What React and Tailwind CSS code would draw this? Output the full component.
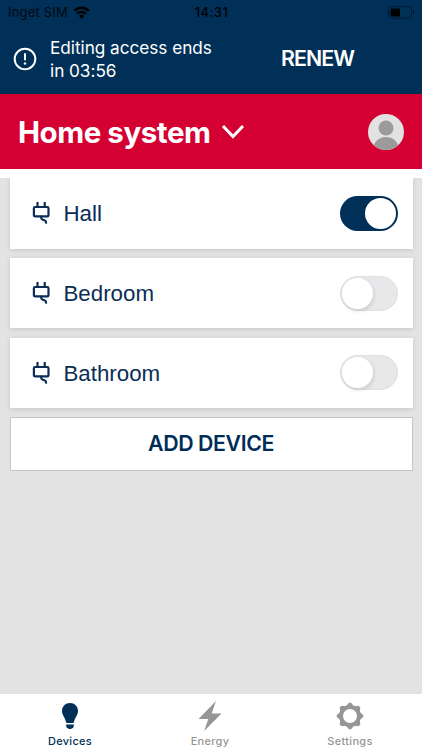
import { useState } from "react";

function StatusBar() {
  return (
    <div className="flex h-6 items-center justify-between pl-2 pr-[7px] text-black">
      <div className="flex w-[170px] items-center gap-[5px]">
        <span className="text-[13px] leading-6 tracking-[0.2px] opacity-80">Inget SIM</span>
        <svg width="17" height="13" viewBox="0 0 17 13" fill="none" stroke="currentColor">
          <path d="M1.2 4.8a10.4 10.4 0 0 1 14.6 0" strokeWidth="2.4" />
          <path d="M4 7.8a6.4 6.4 0 0 1 9 0" strokeWidth="2.2" />
          <path d="M8.5 12.5 5.9 9.9a3.7 3.7 0 0 1 5.2 0z" fill="currentColor" stroke="none" />
        </svg>
      </div>
      <span className="text-[13px] font-medium leading-6 tracking-[0.4px]">14:31</span>
      <div className="flex w-[170px] justify-end">
        <svg width="27" height="13" viewBox="0 0 27 13">
          <rect x="0.6" y="0.6" width="23" height="11.6" rx="3" fill="none" stroke="#001a34" />
          <rect x="2.5" y="2.5" width="9.5" height="8" rx="1" fill="#000" />
          <path d="M25 4.5c1.8.7 1.8 3.3 0 4z" fill="#001a34" />
        </svg>
      </div>
    </div>
  );
}

function PlugIcon() {
  return (
    <svg
      width="18"
      height="24"
      viewBox="0 0 18 24"
      fill="none"
      stroke="currentColor"
      strokeWidth="2.2"
      strokeLinecap="round"
      strokeLinejoin="round"
    >
      <path d="M5.5 1.8V6M12.7 1.8V6" />
      <rect x="1.9" y="6" width="14.6" height="9.4" rx="1.2" />
      <path d="M9.2 15.8v1c0 1 .6 1.6 1.5 1.9l1.8.6c1 .4 1.6 1.100 1.6 2.500" />
    </svg>
  );
}

function Toggle({ on, onClick }) {
  return (
    <button
      onClick={onClick}
      className={`flex h-[35px] w-[57.5px] items-center rounded-full ${
        on
          ? "justify-end bg-[#003057] pr-[1.5px]"
          : "justify-start border border-[#e0e0e2] bg-[#e8e8ea] pl-px"
      }`}
    >
      <span
        className={`size-[31px] rounded-full bg-white ${
          on ? "" : "shadow-[1px_2px_4px_rgba(0,0,0,0.12)]"
        }`}
      />
    </button>
  );
}

function DeviceCard({ name, on, onToggle }) {
  return (
    <div className="flex h-[70.5px] items-center bg-white pl-[22px] pr-[15px] text-[#0b2d55] shadow-[0_1px_5px_rgba(0,0,0,0.13)]">
      <PlugIcon />
      <span className="ml-[14px] flex-1 pt-0.5 font-['Liberation_Sans',sans-serif] text-[22.3px] leading-7">
        {name}
      </span>
      <Toggle on={on} onClick={onToggle} />
    </div>
  );
}

function BulbIcon() {
  return (
    <svg width="18" height="28" viewBox="0 0 18 28" fill="currentColor">
      <path d="M9 1C4.5 1 1 4.4 1 8.8c0 4.7 3 6.2 4 11.1.1.7.5 1.1 1.1 1.1h5.8c.6 0 1-.4 1.1-1.1 1-4.9 4-6.4 4-11.1C17 4.4 13.5 1 9 1z" />
      <path d="M5 22.4h8l-.5 2.5c-.2.9-.8 1.1-1.5 1.3-.5 1-3.5 1-4 0-.7-.2-1.3-.4-1.5-1.3z" />
    </svg>
  );
}

function BoltIcon() {
  return (
    <svg width="26" height="32" viewBox="0 0 26 32" fill="currentColor">
      <path d="M19 1 1.5 19h9.8L7.2 31 24.5 13.4h-9.8z" />
    </svg>
  );
}

function GearIcon() {
  return (
    <svg width="28" height="28" viewBox="0 0 28 28" fill="none" stroke="currentColor">
      <circle cx="14" cy="14" r="9" strokeWidth="4" />
      {[0, 45, 90, 135, 180, 225, 270, 315].map((angle) => (
        <path
          key={angle}
          d="M12.9 1.2h2.2l2.400 3.600h-7z"
          fill="currentColor"
          strokeWidth="1"
          strokeLinejoin="round"
          transform={`rotate(${angle} 14 14)`}
        />
      ))}
    </svg>
  );
}

const tabs = [
  { label: "Devices", Icon: BulbIcon },
  { label: "Energy", Icon: BoltIcon },
  { label: "Settings", Icon: GearIcon },
];

function App() {
  const [activeTab, setActiveTab] = useState("Devices");
  const [devices, setDevices] = useState([
    { name: "Hall", on: true },
    { name: "Bedroom", on: false },
    { name: "Bathroom", on: false },
  ]);

  const toggleDevice = (name) => {
    setDevices(devices.map((d) => (d.name === name ? { ...d, on: !d.on } : d)));
  };

  return (
    <div className="flex h-[750px] w-[422px] flex-col overflow-hidden bg-[#e3e3e3] font-['Inter',sans-serif]">
      {/* Access banner */}
      <div className="h-[94px] shrink-0 bg-[#003057]">
        <StatusBar />
        <div className="flex h-[70px] items-center pl-[13px] text-white">
          <svg width="24" height="24" viewBox="0 0 24 24" fill="none" stroke="currentColor">
            <circle cx="12" cy="12" r="10.3" strokeWidth="2" />
            <path d="M12 6.2v7" strokeWidth="2" />
            <circle cx="12" cy="16.5" r="1.2" fill="currentColor" stroke="none" />
          </svg>
          <p className="ml-[13px] w-[180px] text-[17.2px] leading-[23.5px] tracking-[-0.03px]">
            Editing access ends
            <br />
            in 03:56
          </p>
          <button className="ml-[51px] text-[21.3px] font-semibold tracking-[-0.9px]">
            RENEW
          </button>
        </div>
      </div>

      {/* Header */}
      <div className="flex h-[75px] shrink-0 items-center bg-[#d50032] px-[18px] text-white">
        <h1 className="text-[29.5px] font-bold leading-9 tracking-[-0.45px]">Home system</h1>
        <svg className="ml-[11px]" width="24" height="16" viewBox="0 0 24 16" fill="none">
          <path d="m2 2 10 10.5L22 2" stroke="currentColor" strokeWidth="3" />
        </svg>
        <div className="ml-auto size-9 overflow-hidden rounded-full bg-[#e2e2e2]">
          <svg width="36" height="36" viewBox="0 0 36 36" fill="#9b9b9b">
            <circle cx="18" cy="14" r="7.5" />
            <ellipse cx="18" cy="34" rx="12.5" ry="11" />
          </svg>
        </div>
      </div>
      <div className="h-[9px] shrink-0 bg-white" />

      {/* Device list, first card continues under the header strip */}
      <div className="flex-1 overflow-hidden px-[9.5px]">
        <div className="flex flex-col gap-[9.25px]">
          {devices.map((device) => (
            <DeviceCard
              key={device.name}
              name={device.name}
              on={device.on}
              onToggle={() => toggleDevice(device.name)}
            />
          ))}
          <button className="h-[54px] border border-[#c4c5ca] bg-white text-[21.3px] font-semibold tracking-[-0.4px] text-[#002d57]">
            ADD DEVICE
          </button>
        </div>
      </div>

      {/* Bottom tabs */}
      <nav className="flex h-14 shrink-0 bg-white">
        {tabs.map(({ label, Icon }) => (
          <button
            key={label}
            onClick={() => setActiveTab(label)}
            className={`flex w-[140px] flex-col items-center ${
              activeTab === label ? "text-[#003057]" : "text-[#969696]"
            }`}
          >
            <span className="flex h-[39px] items-center justify-center pt-1">
              <Icon />
            </span>
            <span className="text-[11px] font-medium leading-4 tracking-[0.3px]">{label}</span>
          </button>
        ))}
      </nav>
    </div>
  );
}

export default App;
